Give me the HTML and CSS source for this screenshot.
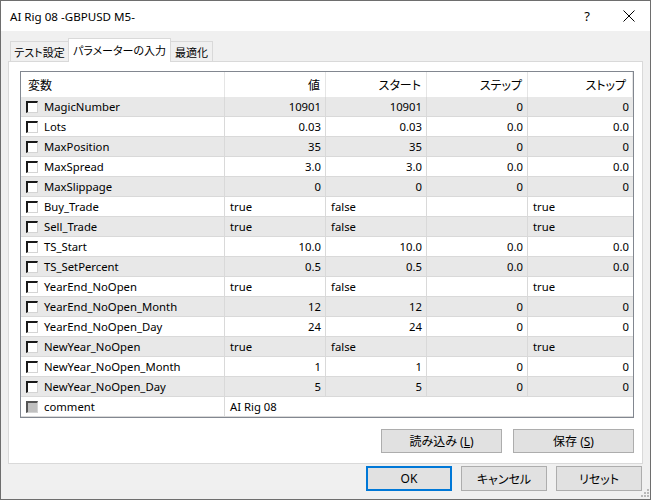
FILE: index.html
```html
<!DOCTYPE html>
<html>
<head>
<meta charset="utf-8">
<link rel="stylesheet" href="styles.css">
</head>
<body>
<div class="window">
  <div class="titlebar">
    <span class="title">AI Rig 08 -GBPUSD M5-</span>
    <span class="help">?</span>
    <span class="close"><svg width="12" height="12" viewBox="0 0 12 12"><path d="M0.5 0.5 L11.5 11.5 M11.5 0.5 L0.5 11.5" stroke="#000" stroke-width="1" fill="none"/></svg></span>
  </div>
  <div class="tabs">
    <div class="tab tab-first">テスト設定</div>
    <div class="tab tab-active">パラメーターの入力</div>
    <div class="tab tab-last">最適化</div>
  </div>
  <div class="panel">
    <div class="grid">
      <div class="row head">
        <div class="c c1">変数</div>
        <div class="c c2 r">値</div>
        <div class="c c3 r">スタート</div>
        <div class="c c4 r">ステップ</div>
        <div class="c c5 r">ストップ</div>
      </div>
      <div class="row alt"><div class="c c1"><span class="cb"></span>MagicNumber</div><div class="c c2 r">10901</div><div class="c c3 r">10901</div><div class="c c4 r">0</div><div class="c c5 r">0</div></div>
      <div class="row"><div class="c c1"><span class="cb"></span>Lots</div><div class="c c2 r">0.03</div><div class="c c3 r">0.03</div><div class="c c4 r">0.0</div><div class="c c5 r">0.0</div></div>
      <div class="row alt"><div class="c c1"><span class="cb"></span>MaxPosition</div><div class="c c2 r">35</div><div class="c c3 r">35</div><div class="c c4 r">0</div><div class="c c5 r">0</div></div>
      <div class="row"><div class="c c1"><span class="cb"></span>MaxSpread</div><div class="c c2 r">3.0</div><div class="c c3 r">3.0</div><div class="c c4 r">0.0</div><div class="c c5 r">0.0</div></div>
      <div class="row alt"><div class="c c1"><span class="cb"></span>MaxSlippage</div><div class="c c2 r">0</div><div class="c c3 r">0</div><div class="c c4 r">0</div><div class="c c5 r">0</div></div>
      <div class="row"><div class="c c1"><span class="cb"></span>Buy_Trade</div><div class="c c2">true</div><div class="c c3">false</div><div class="c c4"></div><div class="c c5">true</div></div>
      <div class="row alt"><div class="c c1"><span class="cb"></span>Sell_Trade</div><div class="c c2">true</div><div class="c c3">false</div><div class="c c4"></div><div class="c c5">true</div></div>
      <div class="row"><div class="c c1"><span class="cb"></span>TS_Start</div><div class="c c2 r">10.0</div><div class="c c3 r">10.0</div><div class="c c4 r">0.0</div><div class="c c5 r">0.0</div></div>
      <div class="row alt"><div class="c c1"><span class="cb"></span>TS_SetPercent</div><div class="c c2 r">0.5</div><div class="c c3 r">0.5</div><div class="c c4 r">0.0</div><div class="c c5 r">0.0</div></div>
      <div class="row"><div class="c c1"><span class="cb"></span>YearEnd_NoOpen</div><div class="c c2">true</div><div class="c c3">false</div><div class="c c4"></div><div class="c c5">true</div></div>
      <div class="row alt"><div class="c c1"><span class="cb"></span>YearEnd_NoOpen_Month</div><div class="c c2 r">12</div><div class="c c3 r">12</div><div class="c c4 r">0</div><div class="c c5 r">0</div></div>
      <div class="row"><div class="c c1"><span class="cb"></span>YearEnd_NoOpen_Day</div><div class="c c2 r">24</div><div class="c c3 r">24</div><div class="c c4 r">0</div><div class="c c5 r">0</div></div>
      <div class="row alt"><div class="c c1"><span class="cb"></span>NewYear_NoOpen</div><div class="c c2">true</div><div class="c c3">false</div><div class="c c4"></div><div class="c c5">true</div></div>
      <div class="row"><div class="c c1"><span class="cb"></span>NewYear_NoOpen_Month</div><div class="c c2 r">1</div><div class="c c3 r">1</div><div class="c c4 r">0</div><div class="c c5 r">0</div></div>
      <div class="row alt"><div class="c c1"><span class="cb"></span>NewYear_NoOpen_Day</div><div class="c c2 r">5</div><div class="c c3 r">5</div><div class="c c4 r">0</div><div class="c c5 r">0</div></div>
      <div class="row last"><div class="c c1"><span class="cb cb-dis"></span>comment</div><div class="c cspan">AI Rig 08</div></div>
    </div>
    <div class="panel-buttons">
      <button class="btn btn-wide">読み込み (<u>L</u>)</button>
      <button class="btn btn-wide">保存 (<u>S</u>)</button>
    </div>
  </div>
  <div class="dialog-buttons">
    <button class="btn btn-dlg btn-default">OK</button>
    <button class="btn btn-dlg">キャンセル</button>
    <button class="btn btn-dlg">リセット</button>
  </div>
  <svg class="grip" width="8" height="8" viewBox="0 0 8 8">
    <rect x="6" y="0" width="2" height="2" fill="#b8b8b8"/>
    <rect x="3" y="3" width="2" height="2" fill="#b8b8b8"/>
    <rect x="6" y="3" width="2" height="2" fill="#b8b8b8"/>
    <rect x="0" y="6" width="2" height="2" fill="#b8b8b8"/>
    <rect x="3" y="6" width="2" height="2" fill="#b8b8b8"/>
    <rect x="6" y="6" width="2" height="2" fill="#b8b8b8"/>
  </svg>
</div>
</body>
</html>
```

FILE: styles.css
```css
* { box-sizing: border-box; }
html, body { margin: 0; padding: 0; }
body {
  width: 651px;
  height: 500px;
  overflow: hidden;
  font-family: "Noto Sans", "Noto Sans CJK JP", sans-serif;
  font-size: 11.3px;
  color: #000;
  font-feature-settings: "palt";
}
.window {
  position: relative;
  width: 651px;
  height: 500px;
  border: 1px solid #6e6e6e;
  background: #f0f0f0;
}
.titlebar {
  height: 30px;
  background: #fff;
  display: flex;
  align-items: center;
  padding-left: 9px;
}
.title { font-size: 11.6px; flex: 1; }
.help { font-size: 13px; width: 20px; margin-right: 26px; text-align: center; }
.close { width: 12px; height: 12px; margin-right: 15px; display: flex; }
.tabs {
  display: flex;
  align-items: flex-end;
  margin-top: 7px;
  margin-left: 9px;
  height: 23px;
  position: relative;
  z-index: 2;
}
.tab {
  height: 20px;
  border: 1px solid #d9d9d9;
  border-bottom: none;
  background: #f0f0f0;
  display: flex;
  align-items: center;
  justify-content: center;
  font-family: "Noto Sans CJK JP", sans-serif;
  font-size: 11px;
  white-space: nowrap;
}
.tab-first { width: 58px; border-right: none; }
.tab-active {
  width: 103px;
  height: 24px;
  margin-bottom: -1px;
  background: #fff;
  padding-bottom: 2px;
}
.tab-last { width: 42px; border-left: none; }
.panel {
  margin-left: 7px;
  width: 635px;
  height: 403px;
  border: 1px solid #d9d9d9;
  background: #fff;
  padding: 9px 8px 10px 11px;
}
.grid {
  width: 614px;
  height: 347px;
  border: 1px solid #828790;
  background: #fff;
}
.row {
  display: flex;
  height: 20px;
  border-bottom: 1px solid #d9d9d9;
}
.row.alt { background: #e8e8e8; }
.row.head { height: 25px; border-bottom: none; background: #fff; }
.row.head .c { border-right-color: #e5e5e5; font-family: "Noto Sans CJK JP", sans-serif; font-size: 12px; padding-right: 5px; }
.row.head .c1 { padding-left: 7px; }
.c {
  display: flex;
  align-items: center;
  border-right: 1px solid #d9d9d9;
  padding: 0 4px 0 5px;
  white-space: nowrap;
  overflow: hidden;
}
.c.r { justify-content: flex-end; }
.c1 { width: 204px; }
.c2, .c3, .c4 { width: 101px; }
.c5 { width: 105px; border-right: none; }
.row.head .c5 { border-right: 1px solid #e5e5e5; padding-right: 6px; }
.cspan { flex: 1; border-right: none; }
.cb {
  display: inline-block;
  width: 12px;
  height: 12px;
  margin-right: 6px;
  background: #fff;
  border-top: 2px solid #1a1a1a;
  border-left: 2px solid #1a1a1a;
  border-right: 1px solid #d4d4d4;
  border-bottom: 1px solid #d4d4d4;
  flex: none;
}
.cb-dis { background: #c0c0c0; border-top-color: #555; border-left-color: #555; }
.panel-buttons {
  display: flex;
  justify-content: flex-end;
  gap: 11px;
  margin-top: 11px;
}
.btn {
  height: 24px;
  background: #e1e1e1;
  border: 1px solid #adadad;
  font-family: "Noto Sans", "Noto Sans CJK JP", sans-serif;
  font-feature-settings: "palt";
  font-size: 12px;
  color: #000;
  padding: 0;
  margin: 0;
}
.btn-wide { width: 121px; }
.dialog-buttons {
  display: flex;
  justify-content: flex-end;
  gap: 9px;
  margin-top: 2px;
  margin-right: 8px;
}
.btn-dlg { width: 86px; height: 25px; }
.btn-default { border: 2px solid #0078d7; }
.grip { position: absolute; right: 1px; bottom: 2px; }
```
